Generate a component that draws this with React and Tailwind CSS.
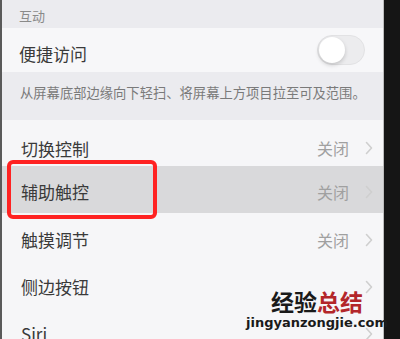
import React from "react";

const font = { fontFamily: '"Noto Sans CJK SC", "Noto Sans", sans-serif' };

function Chevron({ className = "" }) {
  return (
    <svg width="8" height="14" viewBox="0 0 8 14" className={className}>
      <path d="M1.5 1.5 L6.5 7 L1.5 12.5" fill="none" stroke="currentColor" strokeWidth="1.6" strokeLinecap="round" strokeLinejoin="round" />
    </svg>
  );
}

function Row({ label, value, chevron = true, bg = "bg-[#f6f6f8]", pt = "pt-[6px]", h = "h-[47px]" }) {
  return (
    <div className={`${h} shrink-0 flex items-center ${pt} pl-[19px] pr-[10px] ${bg}`}>
      <span className="text-[17px] text-[#3a3a3a] flex-1 leading-none">{label}</span>
      {value && <span className="text-[16px] text-[#a0a0a0] leading-none mr-[16px]">{value}</span>}
      {chevron && <Chevron className="text-[#cfcfcf]" />}
    </div>
  );
}

export default function App() {
  return (
    <div className="w-[400px] h-[339px] overflow-hidden bg-[#151515] flex relative" style={font}>
      <div className="w-[2px] bg-[#5a5a5a]" />
      <div className="w-[382px] flex flex-col bg-[#f6f6f8] border-r border-[#bdbdbd]">
        <div className="h-[28px] shrink-0 bg-[#ebebef] flex items-center pl-[17px] pt-[2px]">
          <span className="text-[13px] text-[#8a8a8a] leading-none">互动</span>
        </div>
        <div className="h-[44px] shrink-0 flex items-center pl-[17px] pr-[18px] bg-[#f7f7f9]">
          <span className="text-[17px] text-[#3a3a3a] flex-1 leading-none pt-[6px]">便捷访问</span>
          <div className="w-[48px] h-[30px] rounded-full bg-[#ececee] border border-[#e2e2e4] relative mb-[1px]">
            <div className="absolute left-[1px] top-[1px] w-[26px] h-[26px] rounded-full bg-white shadow-[0_2px_4px_rgba(0,0,0,0.18)]" />
          </div>
        </div>
        <div className="h-[48px] shrink-0 bg-[#ebebef] pl-[18px] pt-[7px]">
          <span className="text-[13.3px] text-[#7a7a7a] leading-none whitespace-nowrap">从屏幕底部边缘向下轻扫、将屏幕上方项目拉至可及范围。</span>
        </div>
        <Row label="切换控制" value="关闭" h="h-[46px]" pt="pt-[10px]" />
        <Row label="辅助触控" value="关闭" bg="bg-[#d9d9db]" pt="pt-[4px]" />
        <Row label="触摸调节" value="关闭" />
        <Row label="侧边按钮" />
        <Row label="Siri" />
      </div>
      <div className="absolute left-[7px] top-[160px] w-[150px] h-[59px] border-[4px] border-[#ff2222] rounded-[6px]" />
      <div className="absolute left-[250px] top-[290px] w-[134px] flex flex-col items-center">
        <div className="text-[23px] font-bold leading-[23px]" style={{ fontFamily: '"Noto Sans CJK SC", sans-serif' }}>
          <span className="text-[#1a1a1a]">经验</span>
          <span className="text-[#b3262a]">总结</span>
        </div>
        <div className="text-[13px] font-bold text-[#1a1a1a] leading-[13px] mt-[3px] whitespace-nowrap" style={{ fontFamily: '"DejaVu Sans", sans-serif' }}>
          jingyanzongjie.com
        </div>
      </div>
    </div>
  );
}
